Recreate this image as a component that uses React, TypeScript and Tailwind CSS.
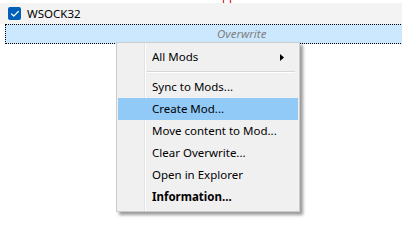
import { Check } from 'lucide-react';

const items = [
  { label: 'Sync to Mods...' },
  { label: 'Create Mod...', active: true },
  { label: 'Move content to Mod...' },
  { label: 'Clear Overwrite...' },
  { label: 'Open in Explorer' },
  { label: 'Information...', bold: true },
];

export default function App() {
  return (
    <div className="relative w-[402px] h-[243px] overflow-hidden bg-white text-[11.5px] text-black font-['Noto_Sans',sans-serif]">
      {/* tail of the row above */}
      <div className="h-[3px] overflow-hidden bg-white">
        <div className="-mt-[12px] pl-[222px] leading-[15px] text-[#d40000]">pp</div>
      </div>

      {/* WSOCK32 row */}
      <div className="flex h-[21px] items-center gap-[6px] bg-[#f3f3f3] pl-[8px]">
        <span className="flex h-[13px] w-[13px] items-center justify-center rounded-[2px] bg-[#005fb8]">
          <Check className="h-[10px] w-[10px] text-white" strokeWidth={3} />
        </span>
        <span className="leading-none">WSOCK32</span>
      </div>

      {/* Overwrite row (selected, focused) */}
      <div className="ml-[5px] flex h-[20px] w-[420px] items-center border border-dotted border-black bg-[#cce8ff] pl-[211px]">
        <span className="italic text-[#808080] leading-none">Overwrite</span>
      </div>

      {/* context menu */}
      <div className="absolute left-[116px] top-[42px] w-[184px] border border-[#cccccc] bg-[#f0f0f0] py-[3px] px-[1px] shadow-[3px_3px_3px_rgba(0,0,0,0.4)]">
        <div className="absolute left-[27px] top-0 bottom-0 w-[2px] border-l border-[#e3e3e3] border-r border-r-white" />

        <div className="relative flex h-[22px] items-center pl-[34px] pr-[14px]">
          <span className="flex-1">All Mods</span>
          <svg width="4" height="7" viewBox="0 0 4 7" className="fill-black">
            <path d="M0 0 L4 3.5 L0 7 Z" />
          </svg>
        </div>

        <div className="relative my-[3px] ml-[29px] mr-[3px] h-[2px] border-t border-[#d7d7d7] border-b border-b-white" />

        {items.map((item) => (
          <div
            key={item.label}
            className={`relative flex h-[22px] items-center pl-[34px] ${item.active ? 'bg-[#91c9f7]' : ''} ${item.bold ? 'font-bold' : ''}`}
          >
            {item.label}
          </div>
        ))}
      </div>
    </div>
  );
}
